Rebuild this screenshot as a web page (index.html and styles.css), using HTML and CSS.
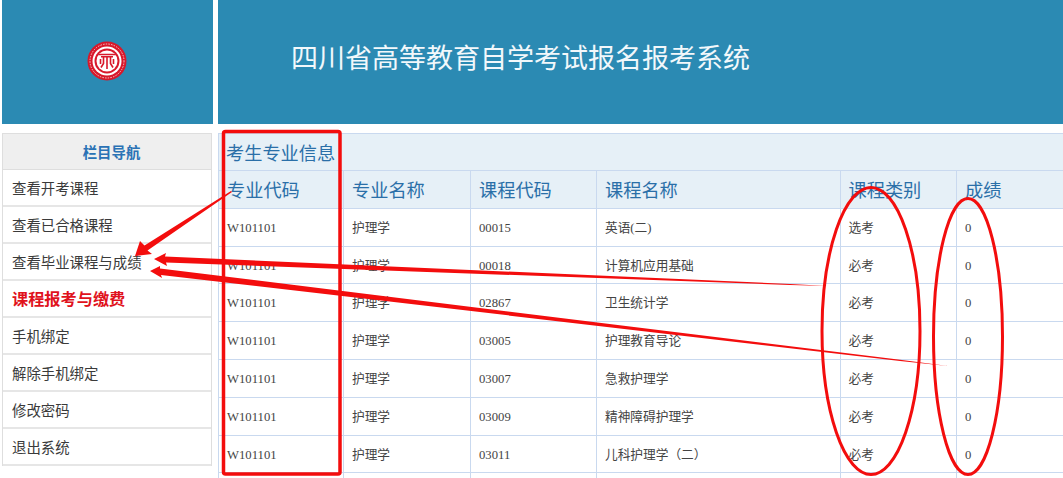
FILE: index.html
```html
<!DOCTYPE html>
<html lang="zh-CN">
<head>
<meta charset="utf-8">
<title>四川省高等教育自学考试报名报考系统</title>
<link rel="stylesheet" href="styles.css">
</head>
<body>
<div class="page">
  <header class="top">
    <div class="logo-box">
      <svg class="logo" viewBox="0 0 40 40" width="40" height="40" aria-hidden="true">
        <circle cx="20" cy="20" r="19.5" fill="#d8182b"/>
        <circle cx="20" cy="20" r="17" fill="none" stroke="#f6c9c9" stroke-width="1" stroke-dasharray="1.5 1.2"/>
        <circle cx="20" cy="20" r="14.5" fill="#fff"/>
        <circle cx="20" cy="20" r="12.5" fill="#d8182b"/>
        <circle cx="20" cy="20" r="10.5" fill="#fff"/>
        <path d="M11.5 13.5h17M14 15.8h12" stroke="#d8182b" stroke-width="1.6" fill="none"/>
        <path d="M16.5 16v6.5l-2.5 4M20 16v12M23.5 16v6.5l2.5 4M13.5 18v5M26.5 18v5" stroke="#d8182b" stroke-width="1.6" fill="none"/>
      </svg>
    </div>
    <div class="title-box">四川省高等教育自学考试报名报考系统</div>
  </header>
  <main class="main">
    <nav class="side">
      <div class="side-head">栏目导航</div>
      <a class="side-item">查看开考课程</a>
      <a class="side-item">查看已合格课程</a>
      <a class="side-item">查看毕业课程与成绩</a>
      <a class="side-item side-hot">课程报考与缴费</a>
      <a class="side-item">手机绑定</a>
      <a class="side-item">解除手机绑定</a>
      <a class="side-item">修改密码</a>
      <a class="side-item">退出系统</a>
    </nav>
    <section class="panel">
      <div class="panel-title">考生专业信息</div>
      <div class="grid">
        <div class="cell head">专业代码</div><div class="cell head">专业名称</div><div class="cell head">课程代码</div><div class="cell head">课程名称</div><div class="cell head">课程类别</div><div class="cell head">成绩</div>

        <div class="cell">W101101</div><div class="cell">护理学</div><div class="cell">00015</div><div class="cell">英语(二)</div><div class="cell">选考</div><div class="cell">0</div>
        <div class="cell">W101101</div><div class="cell">护理学</div><div class="cell">00018</div><div class="cell">计算机应用基础</div><div class="cell">必考</div><div class="cell">0</div>
        <div class="cell">W101101</div><div class="cell">护理学</div><div class="cell">02867</div><div class="cell">卫生统计学</div><div class="cell">必考</div><div class="cell">0</div>
        <div class="cell">W101101</div><div class="cell">护理学</div><div class="cell">03005</div><div class="cell">护理教育导论</div><div class="cell">必考</div><div class="cell">0</div>
        <div class="cell">W101101</div><div class="cell">护理学</div><div class="cell">03007</div><div class="cell">急救护理学</div><div class="cell">必考</div><div class="cell">0</div>
        <div class="cell">W101101</div><div class="cell">护理学</div><div class="cell">03009</div><div class="cell">精神障碍护理学</div><div class="cell">必考</div><div class="cell">0</div>
        <div class="cell">W101101</div><div class="cell">护理学</div><div class="cell">03011</div><div class="cell">儿科护理学（二）</div><div class="cell">必考</div><div class="cell">0</div>
        <div class="cell"></div><div class="cell"></div><div class="cell"></div><div class="cell"></div><div class="cell"></div><div class="cell"></div>
      </div>
    </section>
  </main>
  <svg class="marks" width="1063" height="478" viewBox="0 0 1063 478" aria-hidden="true">
    <rect x="223.5" y="131.5" width="116.5" height="342.5" rx="2" fill="none" stroke="#f30d0d" stroke-width="3.5"/>
    <ellipse cx="871" cy="331" rx="49" ry="143.5" fill="none" stroke="#f30d0d" stroke-width="3"/>
    <ellipse cx="968" cy="336.5" rx="34.5" ry="138" fill="none" stroke="#f30d0d" stroke-width="3"/>
    <polygon points="135,256 140,241 144.5,245.5 231,191 232,192 147.5,250.5 152,254" fill="#f30d0d"/>
    <polygon points="154,259 166,253 165,256.5 790,284 828,286 790,285 166,262.5 167,266" fill="#f30d0d"/>
    <polygon points="150,271 160,266 160,268.5 900,359.7 948,366 900,361 161,275 162,278" fill="#f30d0d"/>
  </svg>
</div>
</body>
</html>
```
FILE: styles.css
```css
* { box-sizing: border-box; }
html, body { margin: 0; padding: 0; }
body {
  width: 1063px;
  height: 478px;
  overflow: hidden;
  background: #fff;
  font-family: "Liberation Serif", "Noto Sans CJK SC", serif;
  color: #444;
}
.page { position: relative; width: 1063px; height: 478px; overflow: hidden; }
.top { display: flex; gap: 5px; height: 124px; padding-left: 2px; }
.logo-box {
  width: 211px;
  background: #2b8ab3;
  display: flex;
  align-items: center;
  justify-content: center;
}
.logo { display: block; margin-top: -3px; margin-left: -1px; }
.title-box {
  flex: 1;
  background: #2b8ab3;
  color: #f2f8fb;
  font-family: "Noto Sans CJK SC", sans-serif;
  font-size: 27px;
  line-height: 114px;
  padding-left: 73px;
}
.main { display: flex; margin-top: 9px; padding-left: 2px; align-items: flex-start; }
.side {
  width: 210px;
  flex: none;
  border-left: 1px solid #dedede;
  border-right: 1px solid #dedede;
  font-family: "Noto Sans CJK SC", sans-serif;
}
.side-head {
  height: 37px;
  line-height: 35px;
  background: #efefef;
  border-top: 1px solid #dedede;
  border-bottom: 1px solid #dedede;
  color: #2a72b5;
  font-size: 14.4px;
  font-weight: 700;
  text-align: center;
  padding-left: 9px;
}
.side-item {
  display: block;
  height: 37px;
  line-height: 35px;
  padding-left: 9px;
  border-bottom: 2px solid #e6e6e6;
  font-size: 14.4px;
  color: #3a3a3a;
}
.side-hot { color: #e0121c; font-size: 16.2px; font-weight: 700; }
.panel { margin-left: 6px; flex: 1; min-width: 0; border-left: 1px solid #c9d9ef; }
.panel-title {
  height: 38px;
  line-height: 37px;
  padding-left: 7px;
  background: #e6f0f7;
  border-top: 1px solid #c9d9ef;
  border-bottom: 1px solid #c9d9ef;
  color: #2a6fa8;
  font-family: "Noto Sans CJK SC", sans-serif;
  font-size: 18.2px;
}
.grid {
  display: grid;
  grid-template-columns: 125px 127px 126px 243.5px 116.5px 106px;
  grid-template-rows: repeat(9, 37.8px);
}
.cell {
  padding-left: 8px;
  border-right: 1px solid #c9d9ef;
  border-bottom: 1px solid #c9d9ef;
  font-size: 12.7px;
  line-height: 38px;
  color: #444;
  white-space: nowrap;
}
.cell.head {
  background: #e6f0f7;
  color: #2a6fa8;
  font-family: "Noto Sans CJK SC", sans-serif;
  font-size: 18.2px;
  line-height: 37px;
}
.cell:nth-child(6n) { border-right: 0; }
.marks { position: absolute; left: 0; top: 0; pointer-events: none; }
```
